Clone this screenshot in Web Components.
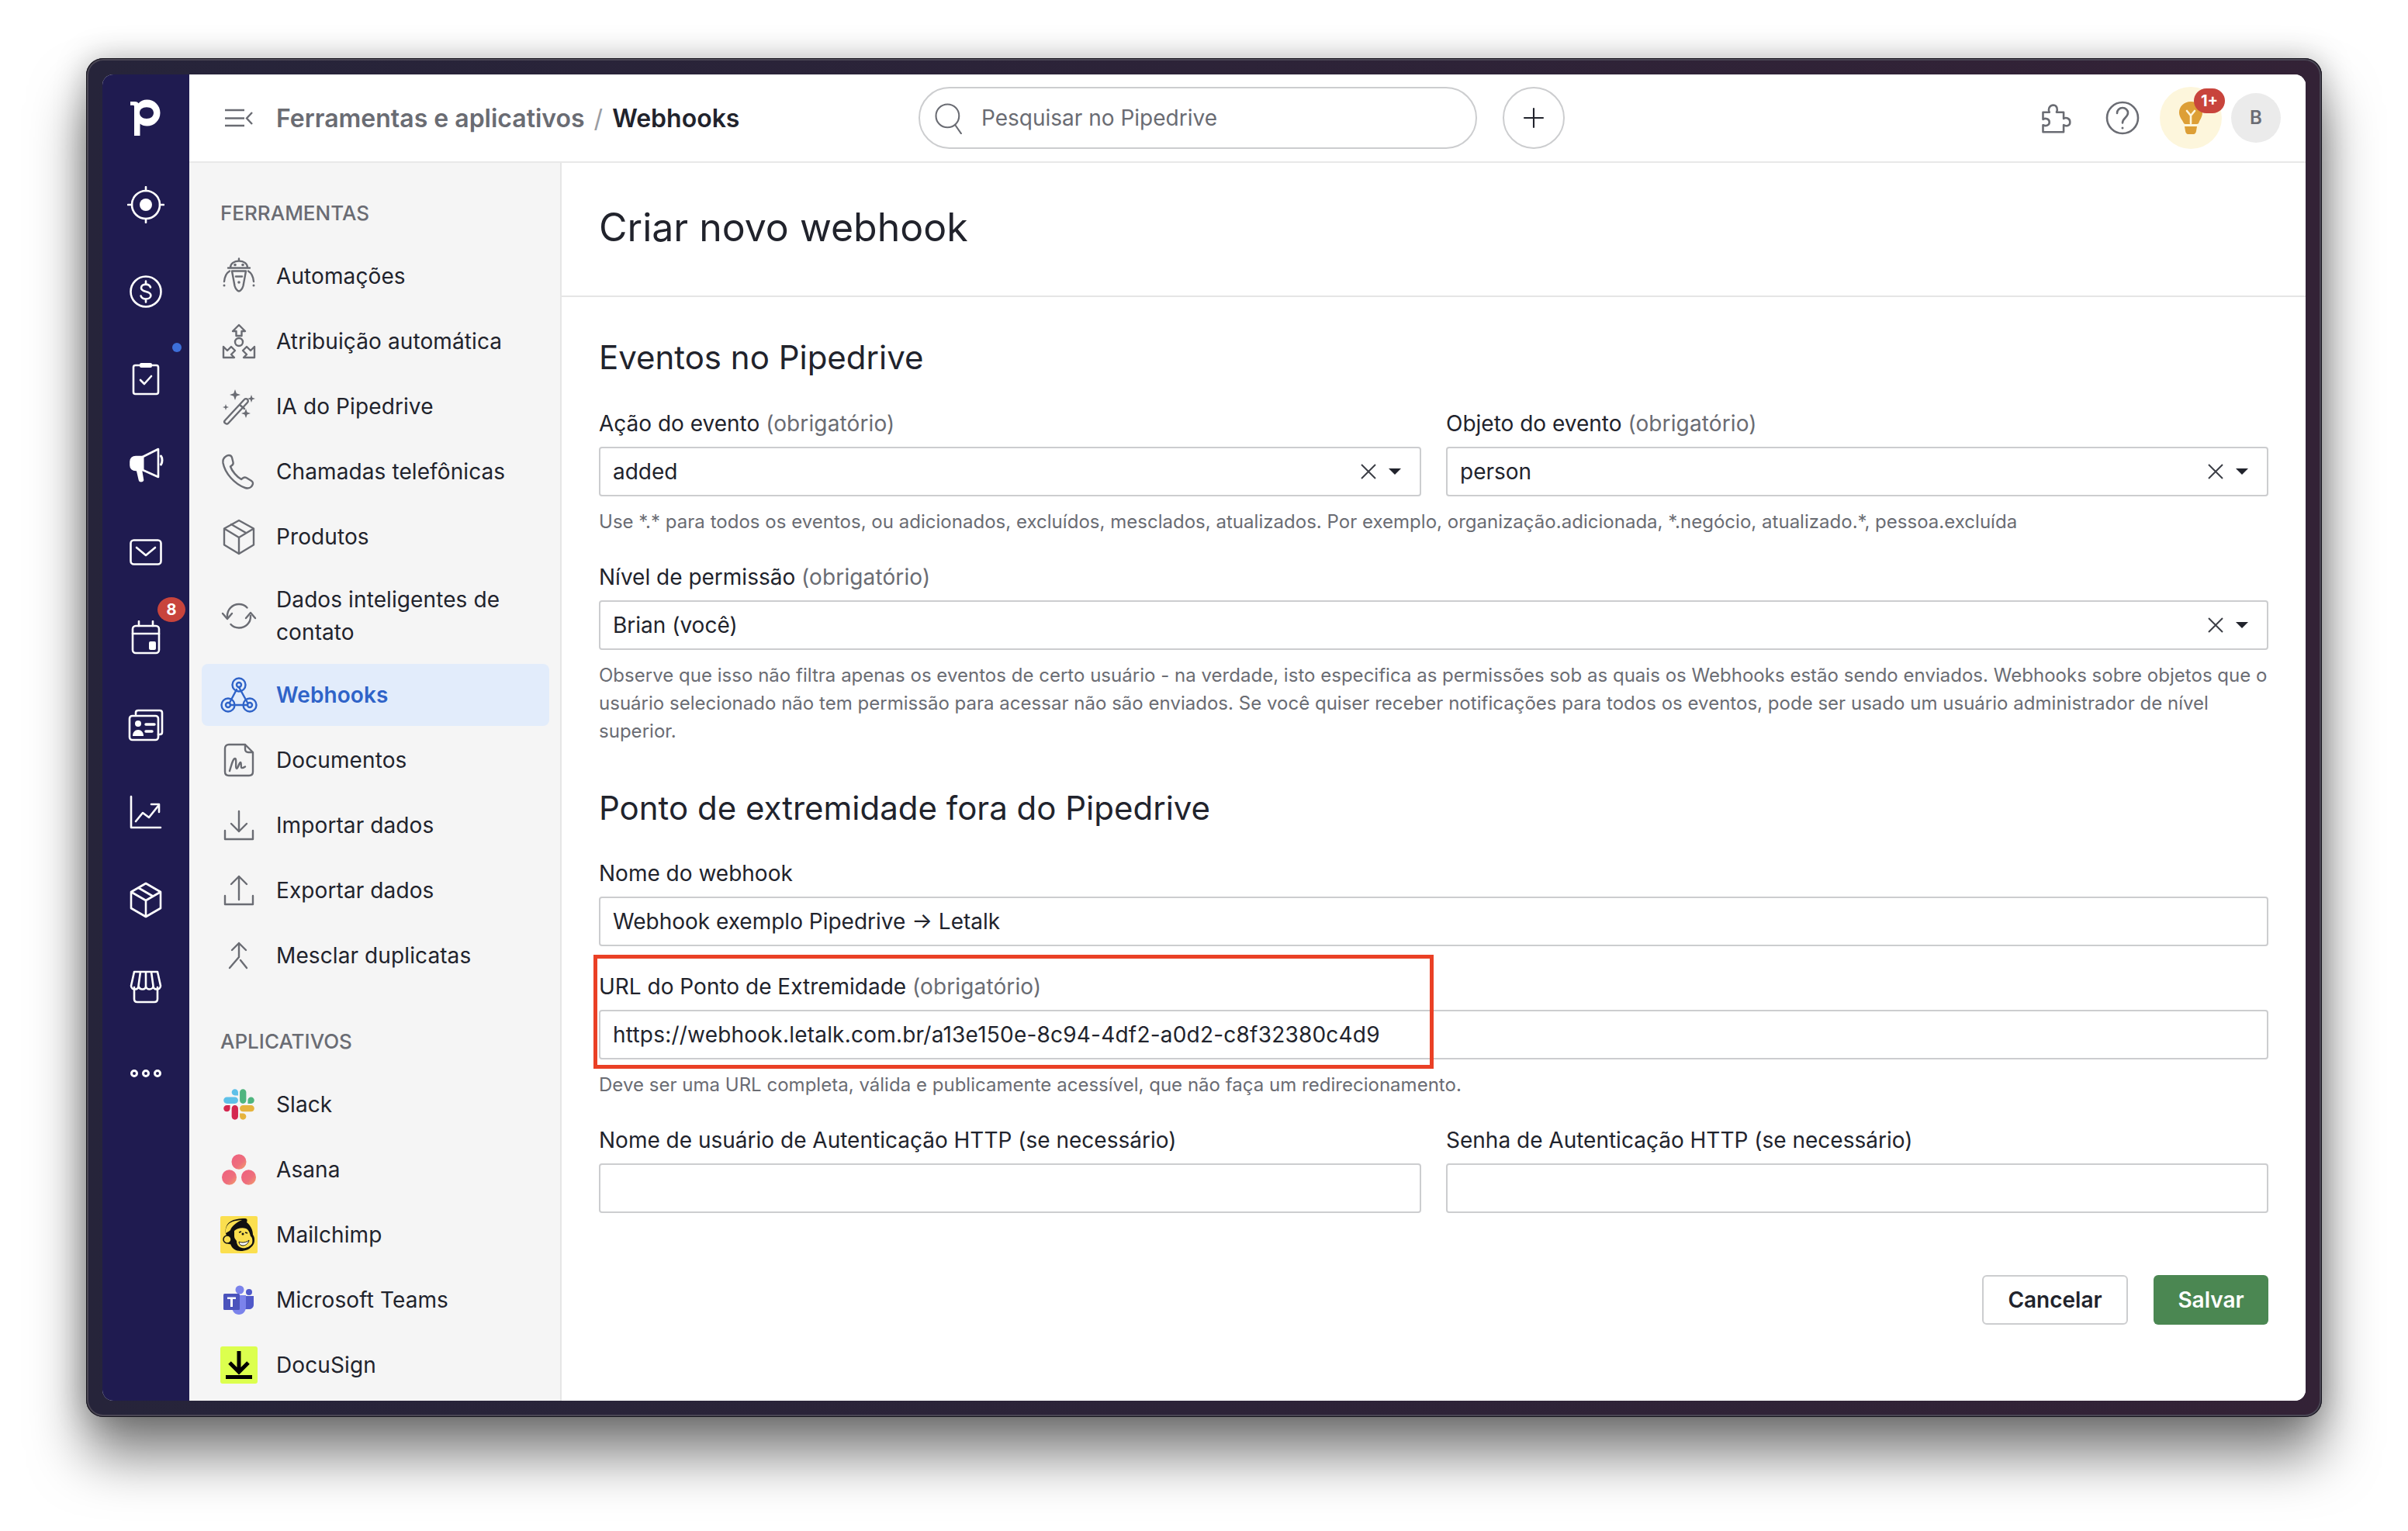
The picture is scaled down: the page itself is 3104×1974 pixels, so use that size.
<!DOCTYPE html>
<html lang="pt-BR">
<head>
<meta charset="utf-8">
<title>Criar novo webhook</title>
<style>
  html, body { margin: 0; background: #fff; }
  body { font-family: Inter, "Liberation Sans", sans-serif; color: #21232c; }
</style>
</head>
<body>
<device-frame>
  <nav-rail slot="rail"></nav-rail>
  <top-bar slot="top"></top-bar>
  <side-menu slot="side">
    <menu-title>FERRAMENTAS</menu-title>
    <menu-item icon="robot">Automações</menu-item>
    <menu-item icon="assign">Atribuição automática</menu-item>
    <menu-item icon="wand">IA do Pipedrive</menu-item>
    <menu-item icon="phone">Chamadas telefônicas</menu-item>
    <menu-item icon="box">Produtos</menu-item>
    <menu-item icon="sync">Dados inteligentes de contato</menu-item>
    <menu-item icon="webhook" active>Webhooks</menu-item>
    <menu-item icon="doc">Documentos</menu-item>
    <menu-item icon="import">Importar dados</menu-item>
    <menu-item icon="export">Exportar dados</menu-item>
    <menu-item icon="merge">Mesclar duplicatas</menu-item>
    <menu-title later>APLICATIVOS</menu-title>
    <menu-item icon="slack">Slack</menu-item>
    <menu-item icon="asana">Asana</menu-item>
    <menu-item icon="mailchimp">Mailchimp</menu-item>
    <menu-item icon="teams">Microsoft Teams</menu-item>
    <menu-item icon="docusign">DocuSign</menu-item>
  </side-menu>
  <webhook-form slot="main"></webhook-form>
</device-frame>

<script>
// all svg bodies live here, viewBox 0 0 48 48 unless the icon says otherwise
const ICONS = {
  target: `<circle cx="24" cy="24" r="18"/><circle cx="24" cy="24" r="8" fill="currentColor" stroke="none"/><path d="M24 1v5M24 42v5M1 24h5M42 24h5"/>`,
  dollar: `<circle cx="24" cy="24" r="19.500"/><path d="M30 18.500c-.8-2.600-3.200-3.900-6-3.900-3.400 0-6 1.900-6 4.600 0 6.400 12.400 3.200 12.400 9.700 0 2.800-2.900 4.600-6.400 4.600-3 0-5.500-1.300-6.400-3.900M24 10.500v4M24 33.500v4"/>`,
  tasks: `<rect x="8" y="7" width="32" height="37" rx="2.500"/><rect x="16" y="4" width="16" height="6" rx="2" fill="currentColor" stroke="none"/><path d="M17 26l5 5 9-10"/>`,
  megaphone: `<path d="M40 3v36L20 30V13z"/><path d="M20 13H11c-4 0-6.500 2.500-6.500 6v5c0 3.500 2.500 6 6.500 6h9z" fill="currentColor"/><path d="M13 30l3 13c.3 1.500 3.500 1.500 4 0l-2-12" fill="currentColor"/><path d="M43.500 12c2 2.500 2 8.500 0 11" stroke-width="3"/>`,
  mail: `<rect x="4.500" y="8.500" width="39" height="31" rx="4"/><path d="M12 18l12 10 12-10"/>`,
  calendar: `<g transform="translate(0 -2)"><rect x="7" y="9" width="34" height="35" rx="4"/><path d="M7 19h34M15 3v6M33 3v6"/><rect x="28" y="29" width="9" height="11" rx="2" fill="currentColor" stroke="none"/></g>`,
  cards: `<path d="M11 9V7c0-2 1-3 3-3h28c2 0 3 1 3 3v25c0 2-1 3-3 3h-2"/><rect x="3" y="11" width="37" height="31" rx="3.500"/><circle cx="14" cy="21" r="4" fill="currentColor" stroke="none"/><path d="M7 37c0-5 3-8 7-8s7 3 7 8z" fill="currentColor" stroke="none"/><path d="M24 22h11M24 31h8" stroke-width="3.500"/>`,
  chart: `<path d="M5 3v40h38"/><path d="M11 35l9-11 8 6 12-15"/><path d="M31 13h10v10"/>`,
  cube: `<path d="M24 3L43 14v21L24 46 5 35V14zM5 14l19 11 19-11M24 25v21M14 8.500l19 11"/>`,
  store: `<path d="M9 25v15c0 2.500 1.500 4 4 4h22c2.500 0 4-1.500 4-4V25"/><path d="M9 5h30l4 18c0 3-2.500 4.500-5 4.500s-4.500-1.500-4.500-4.500c0 3-2.500 4.500-4.700 4.500S24 26 24 23c0 3-1.900 4.500-4.300 4.500S15 26 14.500 23c0 3-2 4.500-4.500 4.500S5 26 5 23zM17 5l-2.500 18M24 5v18M31 5l2.500 18"/>`,
  robot: `<path d="M24 1.500v3M13 13c0-5 4.500-8.500 11-8.500S35 8 35 13M10 13.500h28"/><path d="M15 17.500h18l-3.500 19c-1 3.500-3.500 7-5.500 7s-4.500-3.500-5.500-7z"/><path d="M12 17.500C8 20 5.500 25 5 31M36 17.500c4 2.500 6.500 7.500 7 13.500M20 24.500h8"/><g fill="currentColor" stroke="none"><circle cx="19" cy="9.500" r="1.800"/><circle cx="29" cy="9.500" r="1.800"/><circle cx="24" cy="32" r="1.800"/><circle cx="5" cy="36" r="1.500"/><circle cx="43" cy="36" r="1.500"/></g>`,
  assign: `<path d="M24 3l8 8h-4.500v6h-7v-6H16z"/><circle cx="24" cy="25" r="5"/><path d="M4 45V31l5 5 5-5 5 5-5 5 4 4zM44 45V31l-5 5-5-5-5 5 5 5-4 4z"/>`,
  wand: `<path d="M6 42L31 15c1-1 3-1 4 0s1 3 0 4L10 46c-1 1-3 .5-4-.5s-1-2.500 0-3.500zM25 22l6 5"/><g fill="currentColor" stroke="none"><path d="M19 2l1.800 5.200L26 9l-5.200 1.800L19 16l-1.800-5.200L12 9l5.200-1.800z"/><path d="M40 9l1.300 3.700L45 14l-3.700 1.300L40 19l-1.300-3.700L35 14l3.700-1.300z"/><path d="M33 27l1.600 4.400L39 33l-4.400 1.600L33 39l-1.600-4.400L27 33l4.400-1.600z"/><path d="M7 21l1 3 3 1-3 1-1 3-1-3-3-1 3-1z"/></g>`,
  phone: `<path d="M11 3c2 0 3.500 1 4 3l1.500 6c.4 1.600-.2 3-1.500 4l-2 1.500c2 6 8.500 13.500 14 16.500l2.300-1.700c1.400-1 3-1 4.300-.2l6.500 4c2 1.300 2.500 3.500 1.200 5.400l-1.300 2C38 45.500 35 46 32 45 18 40 6 26 3.500 13 3 9.500 4 6.500 7 4.500c1.200-.9 2.600-1.500 4-1.500z"/>`,
  box: `<path d="M24 3l19 10.500v21L24 46 5 34.500v-21zM5 13.500L24 25l19-11.500M24 25v21M14 8l19 11"/>`,
  sync: `<path d="M9 25c-.5-9 6.500-16 15-16 4 0 8 1.600 10.500 4.500M39 24c.5 9-6.500 15.500-15 15.500-4 0-8-1.600-10.500-4.500"/><path d="M3 21l6 7 6-7M33 27l6-7 6 7"/>`,
  webhook: `<circle cx="24" cy="11" r="8.500"/><circle cx="24" cy="11" r="3"/><circle cx="10" cy="37" r="8.500"/><circle cx="10" cy="37" r="3"/><circle cx="38" cy="37" r="8.500"/><circle cx="38" cy="37" r="3"/><path d="M24 14l11 20M21 17l-9 17M13 37h22"/>`,
  doc: `<path d="M32 4H11C8 4 6 6 6 9v30c0 3 2 5 5 5h26c3 0 5-2 5-5V14zM32 4v6c0 2.500 1.500 4 4 4h6"/><path d="M12 38c2-6 4-16 7-16 2.500 0 0 13 2 13s3-8 5-8c1.500 0 0 6 1.500 7 1 .5 3-.5 4.500-1.500"/>`,
  import: `<path d="M6 31v11h36V31M24 6v26M14 22l10 10 10-10"/>`,
  export: `<path d="M6 31v11h36V31M24 36V6M14 16L24 6l10 10"/>`,
  merge: `<path d="M24 8v18M15 17l9-9 9 9M24 26L12 40M26 30l8 10"/>`,
  search: `<circle cx="21" cy="21" r="17"/><path d="M32 34l9 13"/>`,
  plus: `<path d="M24 8v32M8 24h32"/>`,
  puzzle: `<path d="M6 44V34c3 2 9 1 9-4s-6-6-9-4V16h9c-2-3-1-9 5-10 6 0 7 6 5 10h10v9c3-2 9-1 9 5s-6 6-9 4v10z"/>`,
  help: `<circle cx="24" cy="24" r="20"/><path d="M17 18c0-4 3-7 7-7s7 3 7 6.500c0 6-7 6.500-7 13"/><circle cx="24" cy="37" r="1.500" fill="currentColor" stroke="none"/>`
};

// brand tiles keep their own colours, so they don't go through the stroke wrapper
const BRANDS = {
  slack: `<svg width="40" height="40" viewBox="0 0 127 127"><path fill="#d4274f" d="M27.200 80c0 7.300-5.900 13.200-13.200 13.200S.8 87.300.8 80s5.900-13.200 13.200-13.200h13.200V80zm6.600 0c0-7.300 5.900-13.200 13.200-13.200s13.200 5.900 13.200 13.200v33c0 7.300-5.900 13.200-13.200 13.200s-13.200-5.900-13.200-13.200V80z"/><path fill="#5ec0e8" d="M47 27c-7.300 0-13.200-5.900-13.200-13.200S39.700.6 47 .6s13.200 5.900 13.200 13.200V27H47zm0 6.700c7.300 0 13.200 5.900 13.200 13.200s-5.900 13.200-13.200 13.200H13.900C6.600 60.100.7 54.200.7 46.900s5.900-13.200 13.200-13.200H47z"/><path fill="#4fb57f" d="M99.900 46.900c0-7.300 5.900-13.200 13.200-13.200s13.200 5.900 13.200 13.200-5.900 13.200-13.200 13.200H99.900V46.900zm-6.600 0c0 7.300-5.900 13.200-13.200 13.200s-13.200-5.900-13.200-13.200V13.800C66.900 6.500 72.800.6 80.100.6s13.200 5.900 13.200 13.200v33.100z"/><path fill="#e6b33d" d="M80.100 99.800c7.300 0 13.200 5.900 13.200 13.200s-5.900 13.200-13.200 13.200-13.200-5.900-13.200-13.200V99.800h13.200zm0-6.600c-7.300 0-13.200-5.900-13.200-13.200s5.900-13.200 13.200-13.200h33.100c7.300 0 13.200 5.900 13.200 13.200s-5.900 13.200-13.200 13.200H80.100z"/></svg>`,
  asana: `<svg width="44" height="40" viewBox="0 0 44 40"><defs><linearGradient id="a" x1="0" y1="0" x2="1" y2="1"><stop offset="0" stop-color="#ee5f80"/><stop offset=".6" stop-color="#ee6f7c"/><stop offset="1" stop-color="#f3a26a"/></linearGradient></defs><ellipse cx="22" cy="10" rx="9.500" ry="9.800" fill="url(#a)"/><ellipse cx="9.500" cy="30" rx="9.500" ry="9.800" fill="url(#a)"/><ellipse cx="34.500" cy="30" rx="9.500" ry="9.800" fill="url(#a)"/></svg>`,
  mailchimp: `<svg width="48" height="48" viewBox="0 0 48 48"><rect width="48" height="48" rx="2" fill="#fbdf4f"/><path d="M9 26C5 22 6 11 13 7c5-3 11-4 19-4 3 0 3 3 2 5 5 4 8 10 8 16 2 2 3 8 1 12-4 7-11 9-17 9-6 0-11-3-13-9-3 1-6-2-4-10z" fill="#111"/><path d="M7 22C6 14 10 9 16 7c3-1 8-2 12-2-8 3-14 9-15 13-1 1-4 3-6 4z" fill="#fbdf4f"/><path d="M18 19c3-3 10-5 15-3 4 2 5 6 6 10 2 1 3 5 2 9-3 5-9 7-13 6-5-1-7-5-7-9-1-2-3-3-3-6s0-5 0-7z" fill="#fbdf4f"/><path d="M24 33c4 2 10 1 13-2-1 5-5 7-8 7-3 0-5-2-5-5z" fill="#fff" stroke="#111"/><circle cx="29" cy="23" r="1.500" fill="#111"/><path d="M24 21l3-1M32 21l3 1" stroke="#111" stroke-width="1.500" fill="none"/><circle cx="9" cy="30" r="5" fill="#fbdf4f" stroke="#111" stroke-width="1.500"/></svg>`,
  teams: `<svg width="42" height="38" viewBox="0 0 42 38"><circle cx="22" cy="6" r="5.500" fill="#7b83eb"/><circle cx="34" cy="9" r="4" fill="#5059c9"/><path d="M28 14h12v11c0 4-3 6-6 6h-6z" fill="#5059c9"/><path d="M12 13h18v15c0 6-4 10-9 10s-9-4-9-10z" fill="#7b83eb"/><rect x="1" y="11" width="21" height="21" rx="1.500" fill="#4b53bc"/><path d="M6 15.500h11v2.500h-4v10h-3V18H6z" fill="#fff"/></svg>`,
  docusign: `<svg width="48" height="48" viewBox="0 0 48 48"><rect width="48" height="48" rx="3" fill="#dcff4e"/><path d="M24 6v27M12 21l12 12 12-12" fill="none" stroke="#000" stroke-width="5"/><rect x="7" y="37" width="34" height="5" fill="#000"/></svg>`
};

function icon(name, size, sw) {
  return `<svg width="${size}" height="${size}" viewBox="0 0 48 48" fill="none" stroke="currentColor" stroke-width="${sw}" stroke-linecap="round" stroke-linejoin="round">${ICONS[name]}</svg>`;
}

class DeviceFrame extends HTMLElement {
  constructor() {
    super();
    this.attachShadow({ mode: "open" });
  }

  connectedCallback() {
    this.shadowRoot.innerHTML = `
      <style>
        :host { display: block; padding: 75px 111px 147px; }
        .bezel {
          height: 1752px;
          box-sizing: border-box;
          padding: 21px;
          border-radius: 22px;
          background: linear-gradient(90deg, #26243a, #332236);
          box-shadow: inset 0 0 0 1px #15141c, inset 0 0 0 3px #4a4654,
            0 50px 70px rgba(0,0,0,.5), 0 0 40px rgba(0,0,0,.26);
        }
        .screen {
          height: 100%;
          display: grid;
          grid-template-columns: 112px 480px 1fr;
          grid-template-rows: 112px 1fr;
          border-radius: 14px;
          overflow: hidden;
          background: #fff;
        }
        ::slotted([slot=rail]) { grid-row: 1 / 3; }
        ::slotted([slot=top]) { grid-column: 2 / 4; }
      </style>
      <div class="bezel">
        <div class="screen">
          <slot name="rail"></slot>
          <slot name="top"></slot>
          <slot name="side"></slot>
          <slot name="main"></slot>
        </div>
      </div>`;
  }
}

class NavRail extends HTMLElement {
  constructor() {
    super();
    this.attachShadow({ mode: "open" });
  }

  connectedCallback() {
    const names = ["target", "dollar", "tasks", "megaphone", "mail", "calendar", "cards", "chart", "cube", "store"];
    const items = names.map(n => {
      let extra = "";
      if (n === "tasks") extra = `<i class="dot"></i>`;
      if (n === "calendar") extra = `<b class="count">8</b>`;
      return `<a class="${n}">${icon(n, 48, 2.6)}${extra}</a>`;
    }).join("");
    this.shadowRoot.innerHTML = `
      <style>
        :host { display: block; background: #1f1b50; color: #fff; min-height: 0; overflow: hidden; }
        a { display: flex; height: 112px; align-items: center; justify-content: center; position: relative; }
        .dot { position: absolute; left: 90px; top: 10px; width: 12px; height: 12px; border-radius: 50%; background: #3d6fd8; }
        .count {
          position: absolute; left: 71px; top: 2px; width: 36px; height: 32px; border-radius: 50%;
          background: #c8443c; color: #fff; font: 700 20px/32px Inter, sans-serif; text-align: center;
        }
        .dots { gap: 5px; }
        .dots i { box-sizing: border-box; width: 10px; height: 10px; border-radius: 50%; border: 3px solid #fff; }
      </style>
      <a>
        <svg width="40" height="48" viewBox="0 0 40 48">
          <path d="M0 3h6c2 0 3.500.8 4.500 2.300C13 2.300 17 .6 21.500 .6 31 .6 38.500 8 38.500 17.500S31 34.500 21.500 34.500c-3.800 0-6.800-1-9-3v15.500H5V9.500C5 8.200 4.500 7.800 3 7.800H0zm21 7.200c-5.500 0-9 3-9 7.300s3.500 7.500 9 7.500 9-3 9-7.500-3.500-7.300-9-7.300z" fill="#fff" fill-rule="evenodd"/>
        </svg>
      </a>
      ${items}
      <a class="dots"><i></i><i></i><i></i></a>`;
  }
}

class TopBar extends HTMLElement {
  constructor() {
    super();
    this.attachShadow({ mode: "open" });
  }

  connectedCallback() {
    this.shadowRoot.innerHTML = `
      <style>
        :host {
          display: flex; align-items: center; box-sizing: border-box; height: 112px; position: relative; z-index: 1;
          padding-left: 46px; box-shadow: 0 2px 0 #e8e8e8; background: #fff; color: #6a6c73;
        }
        .menu { display: flex; margin-right: 30px; }
        .crumbs { font-size: 32px; font-weight: 600; width: 828px; white-space: nowrap; }
        .crumbs span { font-weight: 400; color: #9a9ca1; padding: 0 12px; }
        .crumbs b { font-weight: 600; color: #21232c; }
        .search {
          display: flex; align-items: center; box-sizing: border-box; width: 720px; height: 80px;
          padding-left: 17px; gap: 20px; border: 2px solid #cccdcf; border-radius: 40px; font-size: 28px;
        }
        .plus {
          display: flex; align-items: center; justify-content: center; box-sizing: border-box;
          width: 80px; height: 80px; margin-left: 33px; border: 2px solid #cccdcf; border-radius: 50%; color: #21232c;
        }
        .right { margin-left: auto; display: flex; align-items: center; padding-right: 32px; }
        .puzzle { display: flex; margin-right: 40px; }
        .help { display: flex; margin-right: 24px; }
        .tip {
          position: relative; display: flex; align-items: center; justify-content: center;
          width: 80px; height: 80px; border-radius: 50%; background: #fdf6dc; margin-right: 12px;
        }
        .badge {
          position: absolute; left: 44px; top: 2px; width: 40px; height: 32px; border-radius: 16px;
          background: #c8443c; color: #fff; font-size: 20px; line-height: 32px; font-weight: 700; text-align: center;
        }
        .avatar {
          width: 64px; height: 64px; border-radius: 50%; background: #ebebeb; color: #6a6c73;
          font-size: 24px; font-weight: 600; line-height: 64px; text-align: center;
        }
      </style>
      <span class="menu">
        <svg width="36" height="24" viewBox="0 0 36 24" fill="none" stroke="currentColor" stroke-width="2.400">
          <path d="M0 2h25M0 12.500h25M0 22h25M35 5l-7 7.500 7 7.500"/>
        </svg>
      </span>
      <div class="crumbs">Ferramentas e aplicativos<span>/</span><b>Webhooks</b></div>
      <div class="search">${icon("search", 42, 2.4)}<span>Pesquisar no Pipedrive</span></div>
      <div class="plus">${icon("plus", 36, 2.8)}</div>
      <div class="right">
        <span class="puzzle">${icon("puzzle", 44, 2.8)}</span>
        <span class="help">${icon("help", 48, 2.6)}</span>
        <div class="tip">
          <svg width="32" height="42" viewBox="0 0 32 42">
            <path d="M16 0C7 0 1 6.500 1 14c0 6 4 9.500 5.500 13 .5 1.200 1 2 2.500 2h15c1.500 0 2-.8 2.500-2C27.500 23.500 31 20 31 14 31 6.500 25 0 16 0z" fill="#dd9f36"/>
            <path d="M8 32h16l-1 6c-.3 2-1.500 4-3.500 4h-7c-2 0-3.200-2-3.500-4z" fill="#dd9f36"/>
            <path d="M11 12l5 6 5-6M16 18v10" fill="none" stroke="#fdf6dc" stroke-width="2.600" stroke-linecap="round"/>
          </svg>
          <span class="badge">1+</span>
        </div>
        <div class="avatar">B</div>
      </div>`;
  }
}

class SideMenu extends HTMLElement {
  constructor() {
    super();
    this.attachShadow({ mode: "open" });
  }

  connectedCallback() {
    this.shadowRoot.innerHTML = `
      <style>
        :host {
          display: flex; flex-direction: column; gap: 4px; box-sizing: border-box; min-height: 0; overflow: hidden;
          padding: 47px 14px 0 16px; background: #f5f5f5; border-right: 2px solid #e6e6e6;
        }
      </style>
      <slot></slot>`;
  }
}

class MenuTitle extends HTMLElement {
  constructor() {
    super();
    this.attachShadow({ mode: "open" });
  }

  connectedCallback() {
    this.shadowRoot.innerHTML = `
      <style>
        :host {
          display: block; height: 40px; line-height: 40px; padding-left: 24px; margin-bottom: 17px;
          color: #6a6c73; font-size: 26px; font-weight: 500;
        }
        :host([later]) { margin-top: 47px; }
      </style>
      <slot></slot>`;
  }
}

class MenuItem extends HTMLElement {
  constructor() {
    super();
    this.attachShadow({ mode: "open" });
  }

  connectedCallback() {
    const name = this.getAttribute("icon");
    const art = BRANDS[name] || icon(name, 48, 2.4);
    this.shadowRoot.innerHTML = `
      <style>
        :host {
          display: flex; align-items: center; box-sizing: border-box; flex: none; min-height: 80px;
          padding: 16px 16px 16px 24px; gap: 24px; border-radius: 8px;
          color: #21232c; font-size: 28px; line-height: 42px; letter-spacing: .1px;
        }
        :host([active]) { background: #e2ecfb; color: #2f63c8; font-weight: 600; }
        .art { flex: none; width: 48px; display: flex; justify-content: center; color: #6a6c73; }
        :host([active]) .art { color: #2f63c8; }
      </style>
      <span class="art">${art}</span>
      <span><slot></slot></span>`;
  }
}

class FormField extends HTMLElement {
  constructor() {
    super();
    this.attachShadow({ mode: "open" });
  }

  connectedCallback() {
    const value = this.getAttribute("value") || "";
    const controls = this.hasAttribute("select") ? `
      <svg class="x" width="22" height="22" viewBox="0 0 22 22" fill="none" stroke="#3c3e46" stroke-width="2"><path d="M2 2l18 18M20 2L2 20"/></svg>
      <i class="caret"></i>` : "";
    this.shadowRoot.innerHTML = `
      <style>
        :host { display: block; min-width: 0; }
        label { display: block; height: 40px; font-size: 28px; line-height: 40px; white-space: nowrap; }
        .box {
          display: flex; align-items: center; box-sizing: border-box; height: 64px; margin-top: 10px; padding: 0 24px 0 16px;
          border: 2px solid #cccdcf; border-radius: 4px; background: #fff; font-size: 28px; color: #21232c;
        }
        :host([url]) .box { letter-spacing: .21px; }
        .val { flex: 1; white-space: nowrap; }
        .x { margin-right: 15px; }
        .caret { width: 0; height: 0; border: 8px solid transparent; border-top: 8px solid #21232c; border-bottom: 0; }
        .help { font-size: 24px; line-height: 36px; color: #6a6c73; margin-top: 15px; letter-spacing: .02px; }
      </style>
      <label><slot name="label"></slot></label>
      <div class="box"><span class="val">${value}</span>${controls}</div>
      <div class="help"><slot name="help"></slot></div>`;
    if (!this.querySelector("[slot=help]")) this.shadowRoot.querySelector(".help").remove();
  }
}

class WebhookForm extends HTMLElement {
  constructor() {
    super();
    this.attachShadow({ mode: "open" });
  }

  connectedCallback() {
    const req = `<span style="color:#6a6c73;letter-spacing:.12px">(obrigatório)</span>`;
    this.shadowRoot.innerHTML = `
      <style>
        :host { display: block; min-height: 0; overflow: hidden; position: relative; background: #fff; }
        header { padding: 53px 48px 56px; border-bottom: 2px solid #e5e5e5; }
        h1 { margin: 0; font-size: 50px; font-weight: 400; line-height: 64px; }
        section { padding: 50px 48px 0; }
        h2 { margin: 0 0 37px; font-size: 42px; font-weight: 400; line-height: 56px; }
        h2.next { margin: 53px 0 36px; }
        .row { display: grid; grid-template-columns: 1fr 1fr; gap: 32px; }
        form-field { margin-bottom: 33px; }
        form-field.tight { margin-bottom: 32px; }
        .actions { display: flex; justify-content: flex-end; gap: 33px; margin-top: 47px; }
        button {
          height: 64px; box-sizing: border-box; border-radius: 6px; font: 600 28px Inter, sans-serif;
        }
        .cancel { width: 188px; background: #fff; border: 2px solid #cccdcf; color: #21232c; }
        .save { width: 148px; background: #4b8752; border: 0; color: #fff; }
        .mark { position: absolute; left: 41px; top: 1023px; width: 1083px; height: 147px; box-sizing: border-box; border: 5px solid #ea4025; }
      </style>
      <header><h1>Criar novo webhook</h1></header>
      <section>
        <h2>Eventos no Pipedrive</h2>
        <div class="row">
          <form-field select value="added"><span slot="label">Ação do evento ${req}</span>
            <span slot="help" style="white-space:nowrap">Use *.* para todos os eventos, ou adicionados, excluídos, mesclados, atualizados. Por exemplo, organização.adicionada, *.negócio, atualizado.*, pessoa.excluída</span>
          </form-field>
          <form-field select value="person"><span slot="label">Objeto do evento ${req}</span></form-field>
        </div>
        <form-field select value="Brian (você)"><span slot="label">Nível de permissão ${req}</span>
          <span slot="help">Observe que isso não filtra apenas os eventos de certo usuário - na verdade, isto especifica as permissões sob as quais os Webhooks estão sendo enviados. Webhooks sobre objetos que o usuário selecionado não tem permissão para acessar não são enviados. Se você quiser receber notificações para todos os eventos, pode ser usado um usuário administrador de nível superior.</span>
        </form-field>
        <h2 class="next">Ponto de extremidade fora do Pipedrive</h2>
        <form-field class="tight" value="Webhook exemplo Pipedrive → Letalk"><span slot="label">Nome do webhook</span></form-field>
        <form-field url value="https://webhook.letalk.com.br/a13e150e-8c94-4df2-a0d2-c8f32380c4d9"><span slot="label">URL do Ponto de Extremidade ${req}</span>
          <span slot="help">Deve ser uma URL completa, válida e publicamente acessível, que não faça um redirecionamento.</span>
        </form-field>
        <div class="row">
          <form-field><span slot="label">Nome de usuário de Autenticação HTTP (se necessário)</span></form-field>
          <form-field><span slot="label">Senha de Autenticação HTTP (se necessário)</span></form-field>
        </div>
        <div class="actions">
          <button class="cancel">Cancelar</button>
          <button class="save">Salvar</button>
        </div>
      </section>
      <div class="mark"></div>`;
  }
}

customElements.define("device-frame", DeviceFrame);
customElements.define("nav-rail", NavRail);
customElements.define("top-bar", TopBar);
customElements.define("side-menu", SideMenu);
customElements.define("menu-title", MenuTitle);
customElements.define("menu-item", MenuItem);
customElements.define("form-field", FormField);
customElements.define("webhook-form", WebhookForm);
</script>
</body>
</html>
